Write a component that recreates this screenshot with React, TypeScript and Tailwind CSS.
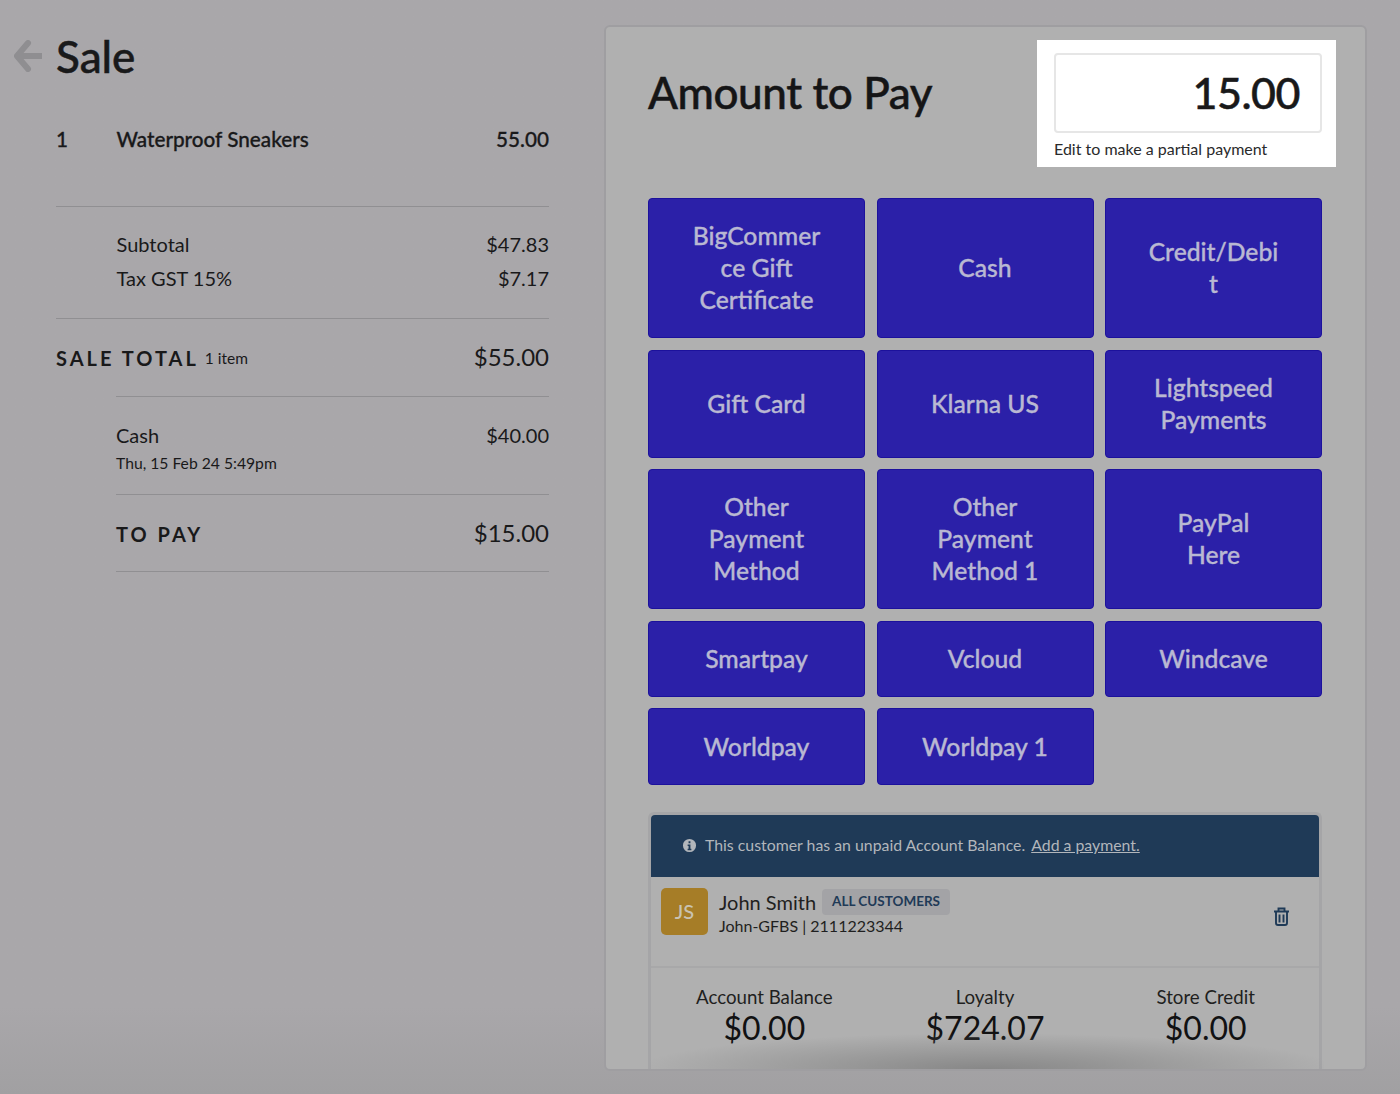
import React from 'react';

const buttons = [
  { lines: ['BigCommer', 'ce Gift', 'Certificate'], h: 'h-[140px]' },
  { lines: ['Cash'], h: 'h-[140px]' },
  { lines: ['Credit/Debi', 't'], h: 'h-[140px]' },
  { lines: ['Gift Card'], h: 'h-[108px]' },
  { lines: ['Klarna US'], h: 'h-[108px]' },
  { lines: ['Lightspeed', 'Payments'], h: 'h-[108px]' },
  { lines: ['Other', 'Payment', 'Method'], h: 'h-[140px]' },
  { lines: ['Other', 'Payment', 'Method 1'], h: 'h-[140px]' },
  { lines: ['PayPal', 'Here'], h: 'h-[140px]' },
  { lines: ['Smartpay'], h: 'h-[76px]' },
  { lines: ['Vcloud'], h: 'h-[76px]' },
  { lines: ['Windcave'], h: 'h-[76px]' },
  { lines: ['Worldpay'], h: 'h-[77px]' },
  { lines: ['Worldpay 1'], h: 'h-[77px]' },
];

function Stat({ label, value }: { label: string; value: string }) {
  return (
    <div className="flex-1 text-center">
      <div className="text-[18.7px] leading-[24px] text-[#1f1f20]">{label}</div>
      <div className="text-[32px] leading-[38px] text-[#111112]">{value}</div>
    </div>
  );
}

export default function App() {
  return (
    <div className="flex h-[1094px] w-[1400px] overflow-hidden bg-gradient-to-b from-[#a9a7aa] from-[92%] to-[#a1a0a2] font-['Lato',sans-serif] text-[#19191a]">
      {/* Left: sale summary */}
      <div className="w-[604px] shrink-0 pl-[14px] pr-[55px]">
        <div className="flex h-[87px] items-center pt-[25px]">
          <svg width="28" height="32" viewBox="0 0 28 32" className="mr-[14px] shrink-0 text-[#8f8e91]">
            <path d="M14 3 L3 16 L14 29 M4 16 H27" fill="none" stroke="currentColor" strokeWidth="6" strokeLinecap="round" strokeLinejoin="round" />
          </svg>
          <h1 className="text-[44px] font-medium leading-none [-webkit-text-stroke:0.5px_currentColor]">Sale</h1>
        </div>
        <div className="pl-[42px]">
          <div className="mt-[38px] flex h-[29px] items-center text-[20.7px] font-medium [-webkit-text-stroke:0.3px_currentColor]">
            <span className="w-[60.5px]">1</span>
            <span className="flex-1">Waterproof Sneakers</span>
            <span>55.00</span>
          </div>
          <div className="mt-[52px] h-[112px] border-t border-[#908f92] pt-[20px] text-[20px]">
            <div className="flex h-[34px] items-center pl-[60.5px]">
              <span className="flex-1">Subtotal</span>
              <span>$47.83</span>
            </div>
            <div className="flex h-[34px] items-center pl-[60.5px]">
              <span className="flex-1">Tax GST 15%</span>
              <span>$7.17</span>
            </div>
          </div>
          <div className="flex h-[78px] items-center border-t border-[#908f92]">
            <span className="text-[20px] font-bold tracking-[3px]">SALE TOTAL</span>
            <span className="ml-[6px] mt-[3px] flex-1 text-[15.5px]">1 item</span>
            <span className="mb-[2px] text-[24px]">$55.00</span>
          </div>
          <div className="ml-[60px] h-[98px] border-t border-[#908f92] pt-[25px]">
            <div className="flex h-[26px] items-center text-[20px]">
              <span className="flex-1">Cash</span>
              <span>$40.00</span>
            </div>
            <div className="mt-[2px] text-[15.7px] leading-[26px]">Thu, 15 Feb 24 5:49pm</div>
          </div>
          <div className="ml-[60px] flex h-[78px] items-center border-y border-[#908f92]">
            <span className="mt-[1px] flex-1 text-[20px] font-bold tracking-[3px]">TO PAY</span>
            <span className="text-[24px]">$15.00</span>
          </div>
        </div>
      </div>

      {/* Right: payment panel */}
      <div className="relative mt-[25px] h-[1046px] w-[763px] shrink-0 overflow-hidden rounded-[6px] border-2 border-[#9f9ea1] bg-[#b0b0b0] pl-[42px]">
        <div className="flex h-[171px] w-[674px]">
          <h2 className="mt-[38px] flex-1 text-[44px] font-medium leading-[54px] tracking-[-0.4px] text-[#151516] [-webkit-text-stroke:0.5px_currentColor]">Amount to Pay</h2>
          <div className="-mr-[14px] mt-[13px] h-[127px] w-[299px] bg-white pl-[17px] pr-[14px] pt-[13px]">
            <div className="flex h-[80px] items-center justify-end rounded-[4px] border-2 border-[#e6e6e6] bg-white pr-[20px] text-[43px] font-medium tracking-[-0.5px] text-[#19191a] [-webkit-text-stroke:0.5px_currentColor]">
              15.00
            </div>
            <div className="mt-[5px] text-[16px] leading-[22px] text-[#2a2a2b]">Edit to make a partial payment</div>
          </div>
        </div>

        <div className="grid w-[674px] grid-cols-3 gap-[11.5px]">
          {buttons.map((b) => (
            <div
              key={b.lines.join(' ')}
              className={`flex ${b.h} flex-col items-center justify-center rounded-[4px] border border-[#1c119c] bg-[#2b20a8] text-center text-[24.7px] font-medium leading-[32px] text-[#b9b8d2] [-webkit-text-stroke:0.35px_currentColor]`}
            >
              {b.lines.map((line, i) => (
                <span key={i}>{line}</span>
              ))}
            </div>
          ))}
        </div>

        <div className="mt-[27px] h-[300px] w-[674px] rounded-t-[6px] border-[3px] border-b-0 border-[#a5a5a7]">
          <div className="flex h-[62px] items-center rounded-t-[4px] bg-[#1f3a57] pb-[2px] pl-[31px] text-[15.85px] text-[#b2b6bb]">
            <svg width="15" height="15" viewBox="0 0 16 16" className="mr-[8px] shrink-0" fill="currentColor">
              <path fillRule="evenodd" d="M8 1a7 7 0 1 0 0 14A7 7 0 0 0 8 1Zm-1 2.5h2v2H7v-2ZM6 7h3v4.5h1V13H6v-1.5h1V8.5H6V7Z" />
            </svg>
            <span>This customer has an unpaid Account Balance.</span>
            <span className="ml-[6px] underline">Add a payment.</span>
          </div>
          <div className="flex h-[91px] border-b-2 border-[#a8a8a9] pl-[10px] pr-[30px] pt-[11px]">
            <div className="flex h-[47px] w-[47px] items-center justify-center rounded-[5px] bg-[#a67d27] pb-[1px] text-[20px] font-medium text-[#c9c3b2]">JS</div>
            <div className="ml-[11px] flex-1">
              <div className="flex h-[27px] items-center">
                <span className="text-[20px] text-[#1f1f20]">John Smith</span>
                <span className="ml-[6px] flex h-[26px] items-center rounded-[4px] bg-[#a3a3a6] px-[10px] text-[13.5px] font-bold text-[#1f3a57]">ALL CUSTOMERS</span>
              </div>
              <div className="text-[16px] leading-[22px] text-[#1f1f20]">John-GFBS | 2111223344</div>
            </div>
            <svg width="15" height="19" viewBox="0 0 15 19" className="mt-[19px] text-[#1f3a57]" fill="none" stroke="currentColor" strokeWidth="1.9">
              <path d="M0 4.5h15M4.5 4.5V1.5h6v3M2 4.5v11.5a2 2 0 0 0 2 2h7a2 2 0 0 0 2-2V4.5M5.5 7.5v8M9.5 7.5v8" />
            </svg>
          </div>
          <div className="flex px-[3px] pt-[17px]">
            <Stat label="Account Balance" value="$0.00" />
            <Stat label="Loyalty" value="$724.07" />
            <Stat label="Store Credit" value="$0.00" />
          </div>
        </div>

        {/* fade at the bottom of the scroll area */}
        <div className="pointer-events-none absolute bottom-0 left-[44px] h-[36px] w-[674px] bg-[radial-gradient(ellipse_52%_100%_at_50%_100%,rgba(128,128,128,0.85),rgba(128,128,128,0))]" />
      </div>
    </div>
  );
}
